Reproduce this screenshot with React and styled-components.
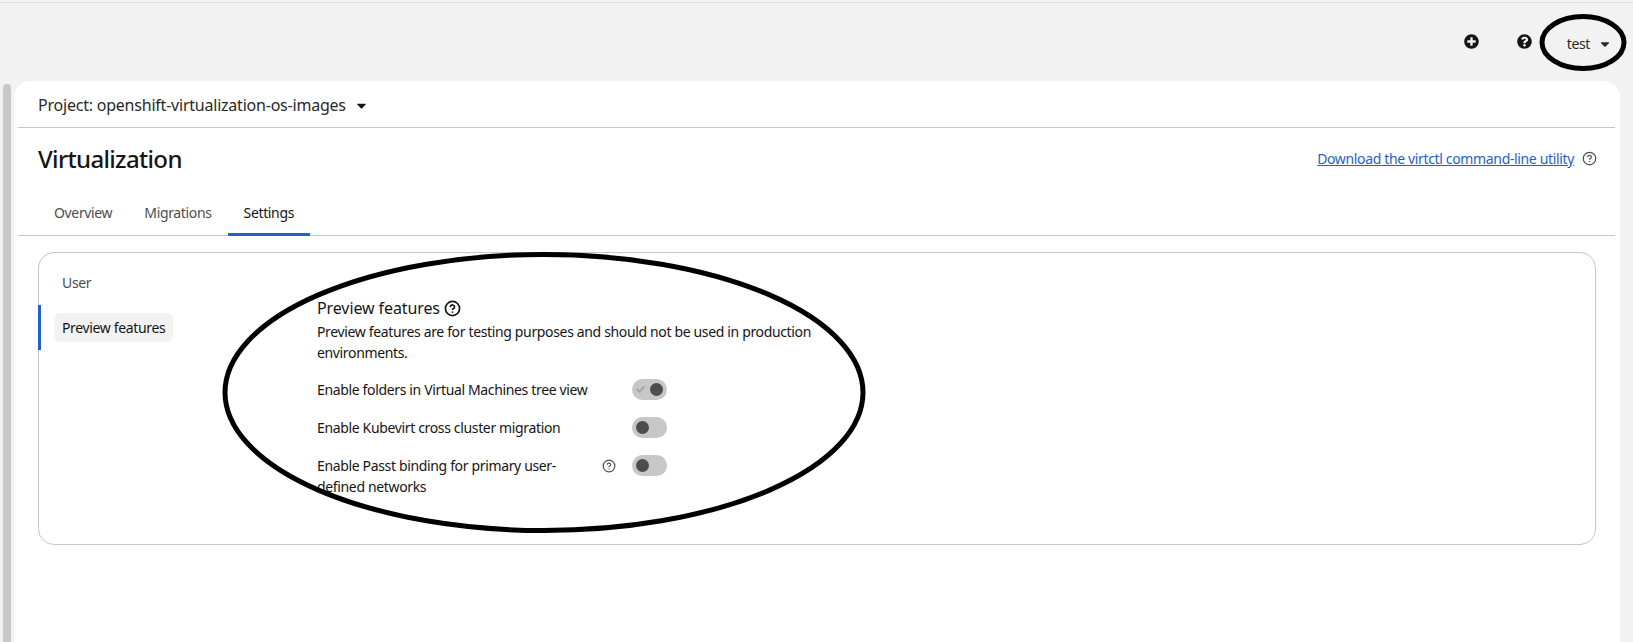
import styled, { createGlobalStyle } from "styled-components";
import { FaPlusCircle, FaQuestionCircle, FaCaretDown, FaCheck } from "react-icons/fa";
import { CircleHelp } from "lucide-react";

const GlobalStyle = createGlobalStyle`
    html, body {
        margin: 0;
        height: 100%;
        overflow: hidden;
        background: #f2f2f2;
        font-family: "Noto Sans", "Liberation Sans", sans-serif;
        letter-spacing: -0.35px;
        color: #151515;
    }
`;

const Page = styled.div`
    position: relative;
    height: 642px;
    display: flex;
    flex-direction: column;
    box-sizing: border-box;
`;

const Masthead = styled.header`
    height: 79px;
    margin-top: 2px;
    border-top: 1px solid #dedede;
    box-sizing: border-box;
    display: flex;
    align-items: flex-start;
    justify-content: flex-end;
    padding: 31px 21px 0 0;
    gap: 38px;
`;

const ToolIcon = styled.span`
    display: flex;
    font-size: 15px;
    color: #151515;
`;

const UserMenu = styled.div`
    display: flex;
    align-items: center;
    gap: 8px;
    margin-left: -3px;
    font-size: 14px;
    line-height: 20px;
    color: #292929;
`;

const Body = styled.div`
    flex: 1;
    display: flex;
    min-height: 0;
`;

const ScrollThumb = styled.div`
    width: 8px;
    margin: 3px 3px 0 3px;
    background: #c7c7c7;
    border-radius: 4px 4px 0 0;
`;

const Panel = styled.main`
    width: 1606px;
    background: #fff;
    border-radius: 16px 16px 0 0;
    padding: 0 5px 0 4px;
    box-sizing: border-box;
`;

const ProjectBar = styled.div`
    height: 44px;
    border-bottom: 1px solid #c7c7c7;
    display: flex;
    align-items: center;
    gap: 8px;
    padding: 2px 0 0 20px;
    font-size: 16px;
    letter-spacing: -0.22px;
    color: #292929;
`;

const TitleRow = styled.div`
    height: 60px;
    padding: 0 0 6px 20px;
    display: flex;
    align-items: center;
    justify-content: space-between;
`;

const Title = styled.h1`
    margin: 0;
    font-size: 24px;
    font-weight: 500;
    letter-spacing: -0.65px;
    color: #151515;
`;

const DownloadLink = styled.a`
    display: flex;
    align-items: center;
    gap: 8px;
    padding-right: 18px;
    font-size: 14px;
    color: #1e62c8;
    text-decoration: underline;
`;

const HelpIcon = styled(CircleHelp)`
    color: #4d4d4d;
    flex: none;
`;

const Tabs = styled.nav`
    height: 42px;
    border-bottom: 1px solid #c7c7c7;
    display: flex;
    padding-left: 20px;
    box-sizing: border-box;
`;

const Tab = styled.div`
    padding: 0 16px 2px;
    height: 42px;
    display: flex;
    align-items: center;
    box-sizing: border-box;
    font-size: 14px;
    color: ${(p) => (p.$active ? "#151515" : "#4d4d4d")};
    border-bottom: 3px solid ${(p) => (p.$active ? "#1e62c8" : "transparent")};
`;

const Card = styled.section`
    margin: 16px 19px 0 20px;
    height: 293px;
    border: 1px solid #c7c7c7;
    border-radius: 16px;
    display: flex;
    box-sizing: border-box;
`;

const SideNav = styled.nav`
    width: 278px;
    flex: none;
    padding-top: 7px;
    display: flex;
    flex-direction: column;
`;

const SideItem = styled.div`
    height: 45px;
    display: flex;
    align-items: center;
    padding-left: 13px;
    margin-left: -1px;
    font-size: 14px;
    color: ${(p) => (p.$active ? "#151515" : "#4d4d4d")};
    border-left: 3px solid ${(p) => (p.$active ? "#1e62c8" : "transparent")};
    box-sizing: border-box;
`;

const SideLabel = styled.span`
    padding: 5px 8px;
    border-radius: 6px;
    background: ${(p) => (p.$active ? "#f2f2f2" : "transparent")};
`;

const Features = styled.div`
    width: 374px;
    padding-top: 45px;
`;

const FeatureHeading = styled.h2`
    margin: 0;
    display: flex;
    align-items: center;
    gap: 4px;
    font-size: 16px;
    line-height: 20px;
    font-weight: 400;
    letter-spacing: -0.1px;
    color: #151515;
`;

const FeatureText = styled.p`
    margin: 3px 0 0;
    width: 505px;
    font-size: 14px;
    line-height: 21px;
    color: #151515;
`;

const FeatureRow = styled.div`
    display: grid;
    grid-template-columns: 285px 30px 35px;
    align-items: start;
    margin-top: ${(p) => (p.$first ? "16px" : "17px")};
`;

const FeatureLabel = styled.span`
    font-size: 14px;
    line-height: 21px;
    color: #151515;
`;

const RowHelp = styled.span`
    display: flex;
    height: 21px;
    align-items: center;
`;

const Toggle = styled.span`
    width: 35px;
    height: 21px;
    border-radius: 11px;
    background: #c7c7c7;
    display: flex;
    align-items: center;
    justify-content: ${(p) => (p.$on ? "flex-end" : "flex-start")};
    gap: 5px;
    padding: 0 4px;
    box-sizing: border-box;
`;

const Knob = styled.span`
    width: 13px;
    height: 13px;
    border-radius: 50%;
    background: #4d4d4d;
    flex: none;
`;

const ToggleCheck = styled(FaCheck)`
    font-size: 9px;
    color: #a3a3a3;
    flex: none;
`;

// hand drawn annotation rings, they lie over the page
const Ring = styled.svg`
    position: absolute;
    left: 0;
    top: 0;
    overflow: visible;
    pointer-events: none;
`;

function Switch({ on }) {
    return (
        <Toggle $on={on}>
            {on && <ToggleCheck />}
            <Knob />
        </Toggle>
    );
}

export default function App() {
    return (
        <Page>
            <GlobalStyle />
            <Masthead>
                <ToolIcon><FaPlusCircle /></ToolIcon>
                <ToolIcon><FaQuestionCircle /></ToolIcon>
                <UserMenu>test <FaCaretDown size={14} /></UserMenu>
            </Masthead>
            <Body>
                <ScrollThumb />
                <Panel>
                    <ProjectBar>
                        Project: openshift-virtualization-os-images
                        <FaCaretDown size={15} color="#151515" />
                    </ProjectBar>
                    <TitleRow>
                        <Title>Virtualization</Title>
                        <DownloadLink>
                            Download the virtctl command-line utility
                            <HelpIcon size={15} />
                        </DownloadLink>
                    </TitleRow>
                    <Tabs>
                        <Tab>Overview</Tab>
                        <Tab>Migrations</Tab>
                        <Tab $active>Settings</Tab>
                    </Tabs>
                    <Card>
                        <SideNav>
                            <SideItem><SideLabel>User</SideLabel></SideItem>
                            <SideItem $active><SideLabel $active>Preview features</SideLabel></SideItem>
                        </SideNav>
                        <Features>
                            <FeatureHeading>
                                Preview features <HelpIcon size={17} color="#151515" strokeWidth={2.4} />
                            </FeatureHeading>
                            <FeatureText>
                                Preview features are for testing purposes and should not be used in production environments.
                            </FeatureText>
                            <FeatureRow $first>
                                <FeatureLabel>Enable folders in Virtual Machines tree view</FeatureLabel>
                                <span />
                                <Switch on />
                            </FeatureRow>
                            <FeatureRow>
                                <FeatureLabel>Enable Kubevirt cross cluster migration</FeatureLabel>
                                <span />
                                <Switch />
                            </FeatureRow>
                            <FeatureRow>
                                <FeatureLabel>Enable Passt binding for primary user-<br />defined networks</FeatureLabel>
                                <RowHelp><HelpIcon size={14} /></RowHelp>
                                <Switch />
                            </FeatureRow>
                        </Features>
                    </Card>
                </Panel>
            </Body>
            <Ring width="1" height="1">
                <ellipse cx="1583" cy="42.5" rx="41" ry="26" fill="none" stroke="#000" strokeWidth="5" />
                <ellipse cx="544" cy="392.5" rx="319" ry="138" fill="none" stroke="#000" strokeWidth="5" />
            </Ring>
        </Page>
    );
}
